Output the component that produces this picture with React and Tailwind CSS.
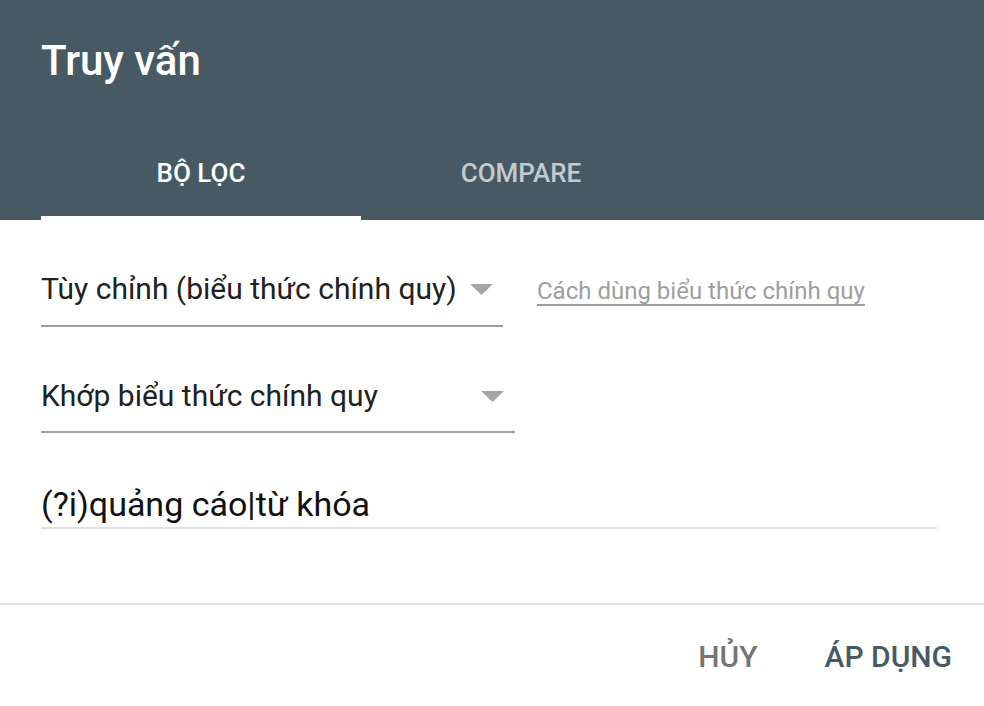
import { useState } from 'react'

function Arrow() {
  return (
    <svg width="23" height="11" viewBox="0 0 23 11" className="shrink-0">
      <path d="M0 0 L23 0 L11.5 11 Z" fill="#a6a6a6" />
    </svg>
  )
}

export default function App() {
  const [tab, setTab] = useState(0)
  const tabs = ['BỘ LỌC', 'COMPARE']

  return (
    <div className="w-[984px] h-[706px] bg-white overflow-hidden" style={{ fontFamily: 'Roboto, "Noto Sans", sans-serif' }}>
      {/* header */}
      <div className="bg-[#475a64] px-[41px]">
        <h1 className="pt-[37px] text-[42px] leading-[48px] font-medium text-white">Truy vấn</h1>
        <div className="flex">
          {tabs.map((t, i) => (
            <button
              key={t}
              onClick={() => setTab(i)}
              className={`w-[320px] pt-[73px] pb-[28px] text-[26px] leading-[30px] font-medium border-b-4 ${
                tab === i ? 'text-white border-white' : 'text-[#c3cbcf] border-transparent'
              }`}
            >
              {t}
            </button>
          ))}
        </div>
      </div>

      {/* body */}
      <div className="px-[41px]">
        <div className="flex items-baseline pt-[53px]">
          <div className="w-[462px] flex items-center justify-between pr-[10px] pb-[20px] border-b-2 border-[#9e9e9e]">
            <span className="text-[30px] leading-[32px] text-[#212121]">Tùy chỉnh (biểu thức chính quy)</span>
            <Arrow />
          </div>
          <a href="#" className="ml-[34px] text-[24px] leading-[32px] text-[#9e9e9e] underline underline-offset-[5px]">
            Cách dùng biểu thức chính quy
          </a>
        </div>

        <div className="mt-[53px] w-[474px] flex items-center justify-between pr-[11px] pb-[19px] border-b-2 border-[#9e9e9e]">
          <span className="text-[30px] leading-[32px] text-[#212121]">Khớp biểu thức chính quy</span>
          <Arrow />
        </div>

        <div className="mt-[53px] w-[896px] pb-[5px] border-b-2 border-[#e0e0e0] text-[34px] leading-[36px] text-[#111]">
          (?i)quảng cáo|từ khóa
        </div>
      </div>

      {/* footer */}
      <div className="mt-[74px] border-t-2 border-[#e0e0e0] pt-[35px] pr-[32px] flex justify-end gap-[67px]">
        <button className="text-[30px] leading-[34px] font-medium text-[#757575]">HỦY</button>
        <button className="text-[30px] leading-[34px] font-medium text-[#455a64]">ÁP DỤNG</button>
      </div>
    </div>
  )
}
